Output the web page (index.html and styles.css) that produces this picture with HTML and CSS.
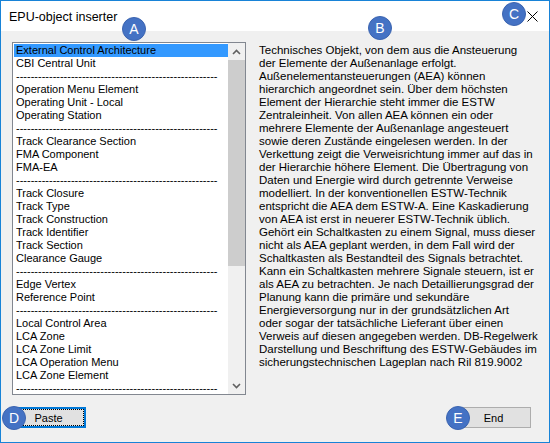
FILE: index.html
```html
<!DOCTYPE html>
<html>
<head>
<meta charset="utf-8">
<link rel="stylesheet" href="styles.css">
</head>
<body>
<div class="window">
  <div class="titlebar">
    <span class="title">EPU-object inserter</span>
    <span class="close"><svg width="11" height="11" viewBox="0 0 11 11"><path d="M0.5 0.5 L10.5 10.5 M10.5 0.5 L0.5 10.5" stroke="#000" stroke-width="1" fill="none"/></svg></span>
  </div>
  <div class="client">
    <div class="main">
      <div class="listbox">
        <ul class="items">
          <li class="selected">External Control Architecture</li>
          <li>CBI Central Unit</li>
          <li class="sep">-------------------------------------------------------</li>
          <li>Operation Menu Element</li>
          <li>Operating Unit - Local</li>
          <li>Operating Station</li>
          <li class="sep">-------------------------------------------------------</li>
          <li>Track Clearance Section</li>
          <li>FMA Component</li>
          <li>FMA-EA</li>
          <li class="sep">-------------------------------------------------------</li>
          <li>Track Closure</li>
          <li>Track Type</li>
          <li>Track Construction</li>
          <li>Track Identifier</li>
          <li>Track Section</li>
          <li>Clearance Gauge</li>
          <li class="sep">-------------------------------------------------------</li>
          <li>Edge Vertex</li>
          <li>Reference Point</li>
          <li class="sep">-------------------------------------------------------</li>
          <li>Local Control Area</li>
          <li>LCA Zone</li>
          <li>LCA Zone Limit</li>
          <li>LCA Operation Menu</li>
          <li>LCA Zone Element</li>
          <li class="sep">-------------------------------------------------------</li>
        </ul>
        <div class="scrollbar">
          <div class="arrow"><svg width="9" height="6" viewBox="0 0 9 6"><path d="M1 5 L4.5 1.5 L8 5" stroke="#606060" stroke-width="1.6" fill="none"/></svg></div>
          <div class="track">
            <div class="thumb"></div>
          </div>
          <div class="arrow"><svg width="9" height="6" viewBox="0 0 9 6"><path d="M1 1 L4.5 4.5 L8 1" stroke="#606060" stroke-width="1.6" fill="none"/></svg></div>
        </div>
      </div>
      <p class="description">Technisches Objekt, von dem aus die Ansteuerung<br>der Elemente der Außenanlage erfolgt.<br>Außenelementansteuerungen (AEA) können<br>hierarchich angeordnet sein. Über dem höchsten<br>Element der Hierarchie steht immer die ESTW<br>Zentraleinheit. Von allen AEA können ein oder<br>mehrere Elemente der Außenanlage angesteuert<br>sowie deren Zustände eingelesen werden. In der<br>Verkettung zeigt die Verweisrichtung immer auf das in<br>der Hierarchie höhere Element. Die Übertragung von<br>Daten und Energie wird durch getrennte Verweise<br>modelliert. In der konventionellen ESTW-Technik<br>entspricht die AEA dem ESTW-A. Eine Kaskadierung<br>von AEA ist erst in neuerer ESTW-Technik üblich.<br>Gehört ein Schaltkasten zu einem Signal, muss dieser<br>nicht als AEA geplant werden, in dem Fall wird der<br>Schaltkasten als Bestandteil des Signals betrachtet.<br>Kann ein Schaltkasten mehrere Signale steuern, ist er<br>als AEA zu betrachten. Je nach Detaillierungsgrad der<br>Planung kann die primäre und sekundäre<br>Energieversorgung nur in der grundsätzlichen Art<br>oder sogar der tatsächliche Lieferant über einen<br>Verweis auf diesen angegeben werden. DB-Regelwerk<br>Darstellung und Beschriftung des ESTW-Gebäudes im<br>sicherungstechnischen Lageplan nach Ril 819.9002</p>
    </div>
    <div class="buttons">
      <button class="btn default"><span class="focus">Paste</span></button>
      <button class="btn">End</button>
    </div>
  </div>
  <span class="badge badge-a">A</span>
  <span class="badge badge-b">B</span>
  <span class="badge badge-c">C</span>
  <span class="badge badge-d">D</span>
  <span class="badge badge-e">E</span>
</div>
</body>
</html>
```
FILE: styles.css
```css
html, body {
  margin: 0;
  padding: 0;
  background: #ffffff;
}
.window {
  position: relative;
  width: 550px;
  height: 443px;
  box-sizing: border-box;
  border: 1px solid #1883d7;
  display: flex;
  flex-direction: column;
  font-family: "Liberation Sans", Arial, sans-serif;
  font-size: 11px;
  color: #000;
}
.titlebar {
  height: 30px;
  background: #ffffff;
  display: flex;
  align-items: center;
  justify-content: space-between;
  padding: 0 9px 0 8px;
  flex: none;
}
.title {
  font-size: 12.5px;
  margin-top: 1px;
}
.close {
  display: flex;
  margin-right: 2px;
  margin-top: 1px;
}
.client {
  flex: 1;
  background: #f0f0f0;
  padding: 11px 18px 0 11px;
  display: flex;
  flex-direction: column;
}
.main {
  display: flex;
  gap: 13px;
}
.listbox {
  width: 234px;
  height: 353px;
  box-sizing: border-box;
  border: 1px solid #828790;
  background: #fff;
  display: flex;
  flex: none;
}
.items {
  list-style: none;
  margin: 0;
  padding: 1px 0 0 1px;
  flex: 1;
  overflow: hidden;
}
.items li {
  height: 13px;
  line-height: 13px;
  padding-left: 2px;
  white-space: nowrap;
}
.items li.selected {
  background: #3399ff;
}
.scrollbar {
  width: 17px;
  background: #f0f0f0;
  display: flex;
  flex-direction: column;
  flex: none;
}
.arrow {
  height: 17px;
  display: flex;
  align-items: center;
  justify-content: center;
  flex: none;
}
.track {
  flex: 1;
  display: flex;
  flex-direction: column;
}
.thumb {
  height: 206px;
  background: #cdcdcd;
}
.description {
  margin: 2px 0 0 0;
  font-size: 11.5px;
  line-height: 13px;
  white-space: nowrap;
}
.buttons {
  display: flex;
  justify-content: space-between;
  margin-top: 12px;
}
.btn {
  width: 75px;
  height: 21px;
  box-sizing: border-box;
  background: #e1e1e1;
  border: 1px solid #adadad;
  font-family: "Liberation Sans", Arial, sans-serif;
  font-size: 11px;
  color: #000;
  padding: 0;
  margin: 0;
}
.btn.default {
  border: 2px solid #0078d7;
  margin-left: -1px;
  display: flex;
  padding: 0;
}
.focus {
  flex: 1;
  display: flex;
  align-items: center;
  justify-content: center;
  outline: 1px dotted #000;
  outline-offset: -1px;
}
.badge {
  position: absolute;
  width: 24px;
  height: 24px;
  box-sizing: border-box;
  border-radius: 50%;
  background: #4472c4;
  border: 1px solid #3b64b0;
  color: #fff;
  font-size: 14px;
  line-height: 22px;
  text-align: center;
}
.badge-a { left: 121px; top: 16px; }
.badge-b { left: 367px; top: 15px; }
.badge-c { left: 501px; top: 1px; }
.badge-d { left: 1px; top: 405px; }
.badge-e { left: 445px; top: 405px; }
```
